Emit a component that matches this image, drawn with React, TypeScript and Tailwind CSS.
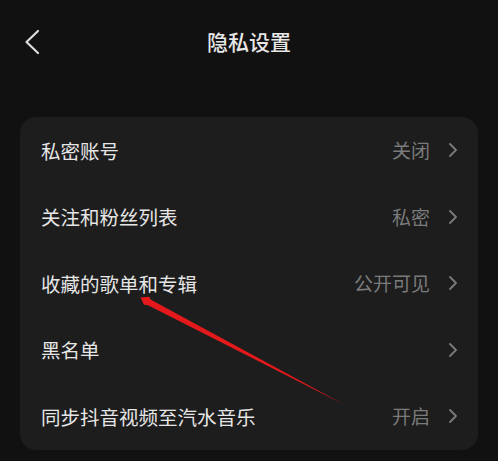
import React from "react";

type Row = {
  label: string;
  value?: string;
};

const ROWS: Row[] = [
  { label: "私密账号", value: "关闭" },
  { label: "关注和粉丝列表", value: "私密" },
  { label: "收藏的歌单和专辑", value: "公开可见" },
  { label: "黑名单" },
  { label: "同步抖音视频至汽水音乐", value: "开启" },
];

function Chevron() {
  return (
    <svg width="8" height="14" viewBox="0 0 8 14" fill="none" className="shrink-0">
      <path d="M1 1l6 6-6 6" stroke="#7a7a7a" strokeWidth="1.8" strokeLinecap="round" strokeLinejoin="round" />
    </svg>
  );
}

function SettingRow({ row }: { row: Row }) {
  return (
    <div className="flex h-[66.5px] items-center justify-between pl-[21px] pr-[21px]">
      <span className="text-[19.5px] text-[#e6e6e6]">{row.label}</span>
      <div className="flex items-center gap-[19px]">
        {row.value && <span className="text-[19px] text-[#7a7a7a]">{row.value}</span>}
        <Chevron />
      </div>
    </div>
  );
}

export default function App() {
  return (
    <div
      className="relative h-[461px] w-[498px] overflow-hidden bg-[#111111]"
      style={{ fontFamily: '"Noto Sans CJK SC", "Noto Sans", sans-serif' }}
    >
      <header className="relative flex h-[84px] items-center justify-center">
        <button className="absolute left-[24px] top-[29px]">
          <svg width="16" height="26" viewBox="0 0 16 26" fill="none">
            <path d="M14 2L2.5 13 14 24" stroke="#dddddd" strokeWidth="2.2" strokeLinecap="round" strokeLinejoin="round" />
          </svg>
        </button>
        <h1 className="text-[21px] font-medium text-[#e6e6e6]">隐私设置</h1>
      </header>

      <div className="mx-[20px] mt-[33px] rounded-[16px] bg-[#1d1d1d]">
        {ROWS.map((row) => (
          <SettingRow key={row.label} row={row} />
        ))}
      </div>

      {/* red annotation arrow */}
      <svg className="pointer-events-none absolute left-0 top-0" width="498" height="461" viewBox="0 0 498 461">
        <polygon
          points="140.5,297.5 149,296.8 151,299.8 344,404.5 147.5,305 144,304.8"
          fill="#e3191b"
        />
      </svg>
    </div>
  );
}
